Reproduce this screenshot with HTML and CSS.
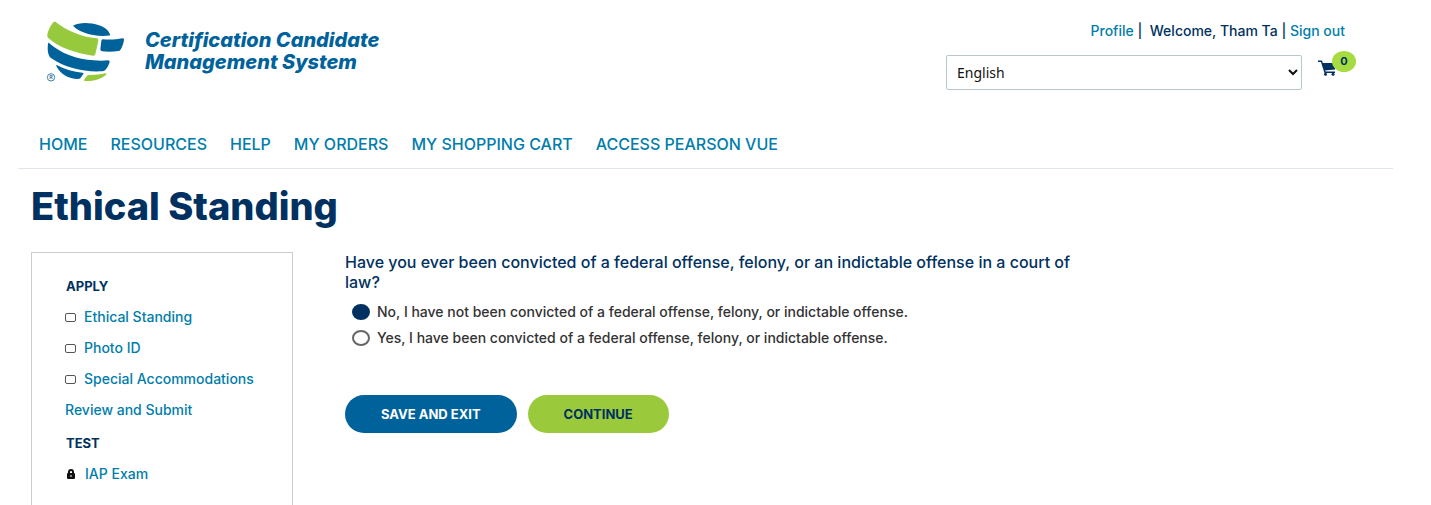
FILE: index.html
```
<!DOCTYPE html>
<html lang="en">
<head>
    <meta charset="UTF-8">
    <meta name="viewport" content="width=device-width, initial-scale=1.0">
    <title>Ethical Standing</title>
    <link rel="stylesheet" href="styles.css">
</head>
<body>
    <header class="site-header">
        <a class="brand" href="#">
            <svg class="logo" viewBox="48 30 240 186" role="img" aria-label="Certification Candidate Management System">
                <path fill="#00629b" d="M129 47C148 36 181 37 207 46C225 52 237 62 241 76C220 80 187 78 160 67C147 62 137 56 129 47Z"/>
                <path fill="#97c93d" d="M76 35C111 62 151 80 201 85Q206 86 205 92L196 133Q194 138 188 137C137 129 87 113 54 83Q51 80 52 74C55 59 63 44 71 36Q74 33 76 35Z"/>
                <path fill="#00629b" d="M219 88C241 90 260 88 278 85Q283 84 282 90C280 102 276 113 271 120Q269 123 265 123C248 126 232 126 216 124Q211 123 211 118L214 92Q215 88 219 88Z"/>
                <path fill="#00629b" d="M57 99C93 131 141 148 191 151Q215 153 234 151Q240 151 239 156C236 167 230 176 225 181Q222 184 216 184C163 187 105 174 64 145Q58 141 56 134C52 122 53 110 54 101Q55 97 57 99Z"/>
                <path fill="#00629b" d="M80 165C104 179 132 186 157 188Q162 188 160 192L152 203Q149 207 143 207C116 206 91 193 79 168Q78 164 80 165Z"/>
                <path fill="#97c93d" d="M178 195C196 195 212 193 227 190Q232 189 228 194C214 207 190 214 165 213Q160 213 163 208L170 199Q173 195 178 195Z"/>
                <circle cx="63" cy="202" r="11" fill="none" stroke="#3f83ad" stroke-width="3"/>
                <text x="63" y="208" text-anchor="middle" class="reg">R</text>
            </svg>
            <span class="brand-name">Certification Candidate<br>Management System</span>
        </a>
        <div class="account">
            <div class="user-links">
                <a href="#">Profile</a> |&nbsp; Welcome, Tham Ta | <a href="#">Sign out</a>
            </div>
            <div class="tools">
                <select class="language" aria-label="Language">
                    <option>English</option>
                </select>
                <a class="cart" href="#" aria-label="Shopping cart">
                    <svg viewBox="0 0 19 16" width="19" height="16">
                        <path fill="none" stroke="#003160" stroke-width="1.5" d="M0 1.2H3.5L7 12.2H17"/>
                        <path fill="#003160" d="M4 3H19L17 9.5L6.5 10.5Z"/>
                        <circle cx="7.5" cy="14.2" r="1.5" fill="#003160"/>
                        <circle cx="15" cy="14.2" r="1.5" fill="#003160"/>
                    </svg>
                    <span class="badge">0</span>
                </a>
            </div>
        </div>
    </header>

    <nav class="main-nav">
        <a href="#">HOME</a>
        <a href="#">RESOURCES</a>
        <a href="#">HELP</a>
        <a href="#">MY ORDERS</a>
        <a href="#">MY SHOPPING CART</a>
        <a href="#">ACCESS PEARSON VUE</a>
    </nav>

    <main>
        <h1>Ethical Standing</h1>
        <div class="columns">
            <aside class="sidebar">
                <h2>APPLY</h2>
                <ul>
                    <li><input type="checkbox" id="ethical" aria-labelledby="ethicalLink"><a id="ethicalLink" href="#">Ethical Standing</a></li>
                    <li><input type="checkbox" id="photo" aria-labelledby="photoLink"><a id="photoLink" href="#">Photo ID</a></li>
                    <li><input type="checkbox" id="special" aria-labelledby="specialLink"><a id="specialLink" href="#">Special Accommodations</a></li>
                    <li><a href="#">Review and Submit</a></li>
                </ul>
                <h2>TEST</h2>
                <ul>
                    <li>
                        <svg class="lock" viewBox="0 0 12 10" width="12" height="10">
                            <path fill="none" stroke="#111" stroke-width="2" d="M4 5V3Q4 1 6 1Q8 1 8 3V5"/>
                            <rect x="2" y="4" width="8" height="6" rx="1" fill="#111"/>
                            <path stroke="#fff" d="M6 6V8"/>
                        </svg>
                        <a href="#">IAP Exam</a>
                    </li>
                </ul>
            </aside>

            <form class="question">
                <fieldset>
                    <legend>Have you ever been convicted of a federal offense, felony, or an indictable offense in a court of law?</legend>
                    <div class="option">
                        <input type="radio" name="convicted" id="no" checked>
                        <label for="no">No, I have not been convicted of a federal offense, felony, or indictable offense.</label>
                    </div>
                    <div class="option">
                        <input type="radio" name="convicted" id="yes">
                        <label for="yes">Yes, I have been convicted of a federal offense, felony, or indictable offense.</label>
                    </div>
                </fieldset>
                <div class="actions">
                    <button type="button" class="save">SAVE AND EXIT</button>
                    <button type="submit" class="continue">CONTINUE</button>
                </div>
            </form>
        </div>
    </main>
</body>
</html>
```

FILE: styles.css
```
* {
    box-sizing: border-box;
}

body {
    display: flex;
    flex-direction: column;
    min-height: 100vh;
    margin: 0;
    padding: 0 38px 0 18px;
    background-color: #fff;
    color: #003160;
    font-family: Inter, "Work Sans", sans-serif;
    font-size: 14px;
    font-weight: 500;
    line-height: 20px;
}

a {
    color: #007dab;
    text-decoration: none;
}

a:hover {
    text-decoration: underline;
}

/* header */
.site-header {
    display: flex;
    justify-content: space-between;
    padding: 20px 56px 0 28px;
}

.brand {
    display: flex;
    gap: 19px;
}

.logo {
    width: 80px;
    height: 62px;
}

.reg {
    fill: #3f83ad;
    font-size: 16px;
    font-weight: 700;
}

.brand-name {
    padding-top: 9px;
    color: #00629b;
    font-size: 20px;
    font-style: italic;
    font-weight: 800;
    line-height: 22px;
}

.account {
    width: 391px;
}

.user-links {
    padding: 1px 0 14px;
    margin-right: -8px;
    text-align: right;
}

.tools {
    display: flex;
    gap: 16px;
}

.language {
    flex: 1;
    height: 35px;
    padding: 0 6px;
    border: 1px solid #b5c9cd;
    border-radius: 2px;
    background-color: #fff;
    color: #111;
    font-family: "Noto Sans", sans-serif;
    font-size: 14px;
}

.cart {
    position: relative;
    width: 19px;
    padding-top: 5px;
}

.badge {
    position: absolute;
    top: -4px;
    left: 14px;
    width: 24px;
    height: 21px;
    border-radius: 50%;
    background-color: #a6dc42;
    color: #003160;
    font-size: 11px;
    font-weight: 700;
    line-height: 20px;
    text-align: center;
}

/* navigation */
.main-nav {
    display: flex;
    gap: 23px;
    padding: 44px 21px 14px;
    border-bottom: 1px solid #e1e6ec;
    font-size: 16px;
}

/* page */
main {
    flex: 1;
    display: flex;
    flex-direction: column;
    padding: 15px 13px 0;
}

h1 {
    margin: 0 0 24px;
    font-size: 38px;
    font-weight: 800;
    line-height: 44px;
}

.columns {
    flex: 1;
    display: flex;
    gap: 52px;
}

.sidebar {
    width: 262px;
    padding: 22px 16px 0 33px;
    border: 1px solid #ccc;
    border-bottom: none;
}

.sidebar h2 {
    margin: 0;
    padding: 0 1px;
    font-size: 13px;
    font-weight: 700;
    line-height: 22px;
}

.sidebar ul {
    margin: 0;
    padding: 0 0 11px;
    list-style: none;
}

.sidebar li {
    display: flex;
    align-items: center;
    gap: 8px;
    padding: 10px 0 1px;
}

.sidebar input {
    appearance: none;
    width: 11px;
    height: 9px;
    margin: 0;
    border: 1px solid #555;
    border-radius: 2px;
}

.sidebar input:checked {
    background-color: #003160;
}

.question {
    flex: 0 1 732px;
}

fieldset {
    margin: 0;
    padding: 0;
    border: none;
}

legend {
    padding: 0 0 10px;
    font-size: 16px;
}

.option {
    display: flex;
    align-items: center;
    gap: 7px;
    padding: 0 7px 6px;
    color: #333;
}

.option input {
    appearance: none;
    flex: none;
    width: 18px;
    height: 16px;
    margin: 0;
    border: 2px solid #666;
    border-radius: 50%;
}

.option input:checked {
    border-color: #003160;
    background-color: #003160;
}

.actions {
    display: flex;
    gap: 11px;
    padding-top: 41px;
}

.actions button {
    height: 38px;
    padding: 0 36px;
    border: none;
    border-radius: 19px;
    font-family: inherit;
    font-size: 13px;
    font-weight: 700;
    cursor: pointer;
}

.save {
    background-color: #00629b;
    color: #fff;
}

.continue {
    background-color: #9aca3c;
    color: #003160;
}
```
